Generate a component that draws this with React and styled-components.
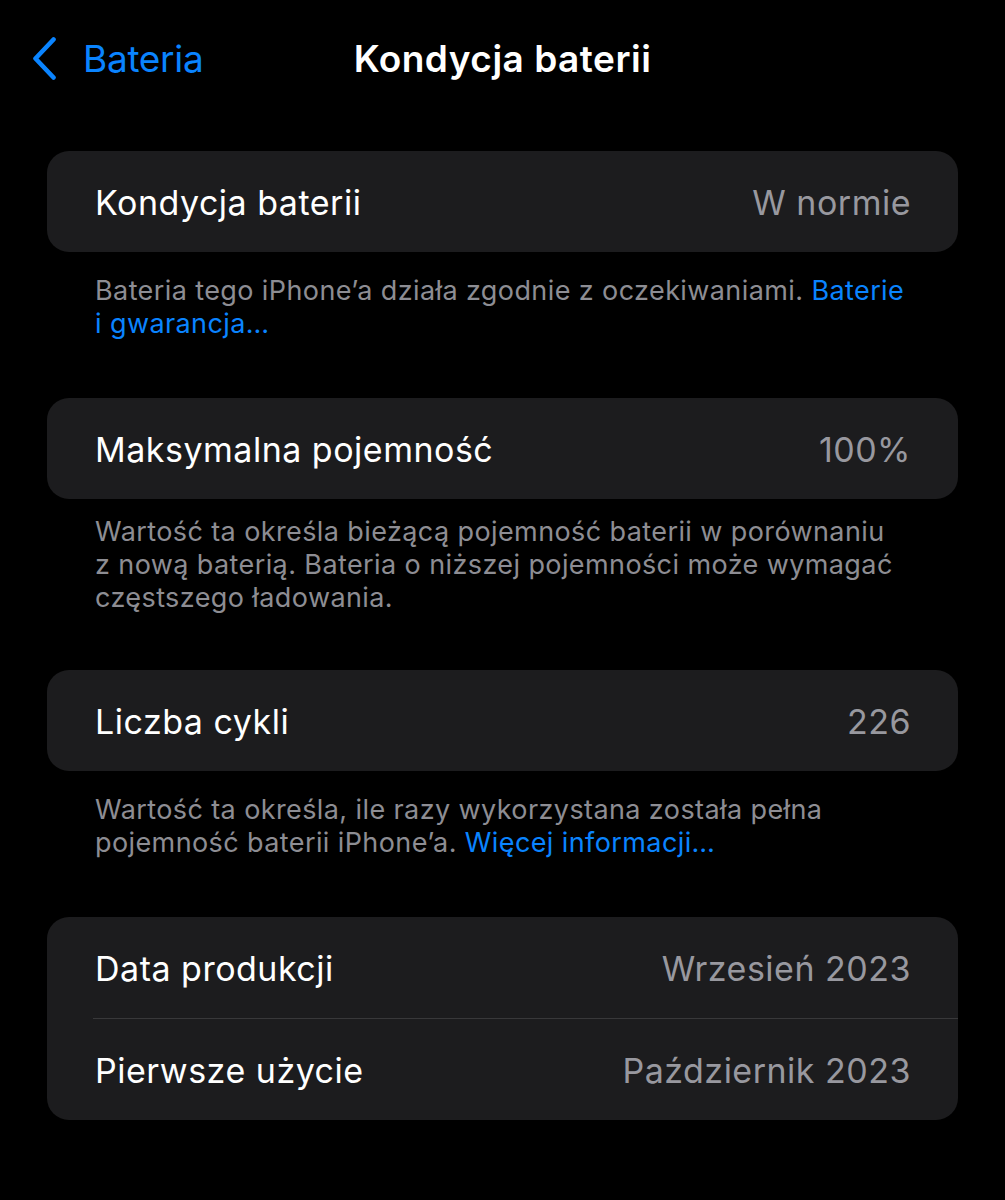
import React from "react";
import styled, { createGlobalStyle } from "styled-components";

const Global = createGlobalStyle`
  html, body { margin: 0; padding: 0; background: #000; }
  body { font-family: Inter, "Noto Sans", "Liberation Sans", sans-serif; -webkit-font-smoothing: antialiased; }
`;

const Page = styled.div`
  width: 1005px;
  min-height: 1200px;
  background: #000;
  box-sizing: border-box;
`;

const Nav = styled.header`
  height: 116px;
  display: grid;
  grid-template-columns: 1fr auto 1fr;
  align-items: center;
  padding: 0 32px;
`;

const Back = styled.div`
  display: flex;
  align-items: center;
  gap: 26px;
  color: #0a84ff;
  font-size: 37px;
  letter-spacing: -0.3px;
`;

const Title = styled.h1`
  margin: 0;
  color: #fff;
  font-size: 37px;
  font-weight: 600;
  letter-spacing: 0.5px;
`;

const Content = styled.main`
  padding: 35px 47px 0;
`;

const Card = styled.section`
  background: #1c1c1e;
  border-radius: 22px;
  overflow: hidden;
`;

const Row = styled.div`
  height: 101px;
  display: flex;
  align-items: center;
  justify-content: space-between;
  padding: 0 47px 0 48px;
  box-sizing: border-box;
`;

const Divider = styled.div`
  height: 1px;
  margin-left: 46px;
  background: #38383a;
`;

const Label = styled.span`
  color: #fff;
  font-size: 34px;
  letter-spacing: 0.5px;
  transform: translateY(1px);
`;

const Value = styled.span`
  color: #98989f;
  font-size: 34px;
  letter-spacing: 0.5px;
  transform: translateY(1px);
`;

const Footer = styled.p`
  margin: 0;
  padding: ${(p) => (p.$tight ? "16px 46px 56px 48px" : "22px 46px 58px 48px")};
  color: #8d8d93;
  font-size: 27px;
  line-height: 33px;
  letter-spacing: 0.4px;
`;

const Link = styled.span`
  color: #0a84ff;
`;

const Chevron = () => (
  <svg width="25" height="43" viewBox="0 0 25 43" fill="none">
    <path d="M21.5 2.5 L3.5 21.5 L21.5 40.5" stroke="#0a84ff" strokeWidth="4.6" strokeLinecap="round" strokeLinejoin="round" />
  </svg>
);

export default function App() {
  return (
    <Page>
      <Global />
      <Nav>
        <Back>
          <Chevron />
          <span>Bateria</span>
        </Back>
        <Title>Kondycja baterii</Title>
        <div />
      </Nav>
      <Content>
        <Card>
          <Row>
            <Label>Kondycja baterii</Label>
            <Value>W normie</Value>
          </Row>
        </Card>
        <Footer>
          Bateria tego iPhone’a działa zgodnie z oczekiwaniami. <Link>Baterie i gwarancja…</Link>
        </Footer>
        <Card>
          <Row>
            <Label>Maksymalna pojemność</Label>
            <Value>100%</Value>
          </Row>
        </Card>
        <Footer $tight>
          Wartość ta określa bieżącą pojemność baterii w porównaniu
          <br />z nową baterią. Bateria o niższej pojemności może wymagać częstszego ładowania.
        </Footer>
        <Card>
          <Row>
            <Label>Liczba cykli</Label>
            <Value>226</Value>
          </Row>
        </Card>
        <Footer>
          Wartość ta określa, ile razy wykorzystana została pełna pojemność baterii iPhone’a. <Link>Więcej informacji…</Link>
        </Footer>
        <Card>
          <Row>
            <Label>Data produkcji</Label>
            <Value>Wrzesień 2023</Value>
          </Row>
          <Divider />
          <Row>
            <Label>Pierwsze użycie</Label>
            <Value>Październik 2023</Value>
          </Row>
        </Card>
      </Content>
    </Page>
  );
}
